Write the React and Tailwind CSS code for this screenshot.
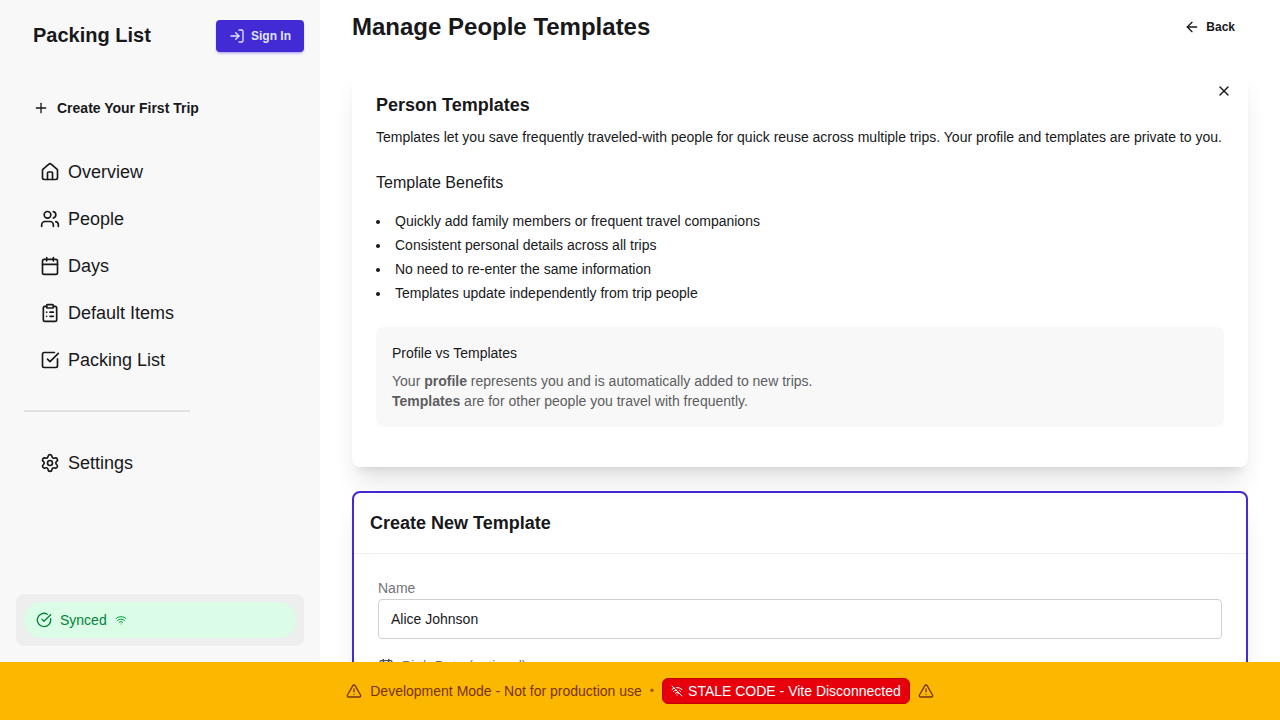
import React from 'react';
import {
  ArrowLeft,
  Calendar,
  CircleCheckBig,
  ClipboardList,
  House,
  LogIn,
  Plus,
  Settings,
  SquareCheckBig,
  TriangleAlert,
  Users,
  Wifi,
  WifiOff,
  X,
} from 'lucide-react';

const NAV = [
  { label: 'Overview', Icon: House },
  { label: 'People', Icon: Users },
  { label: 'Days', Icon: Calendar },
  { label: 'Default Items', Icon: ClipboardList },
  { label: 'Packing List', Icon: SquareCheckBig },
];

const BENEFITS = [
  'Quickly add family members or frequent travel companions',
  'Consistent personal details across all trips',
  'No need to re-enter the same information',
  'Templates update independently from trip people',
];

function NavLink({ label, Icon }) {
  return (
    <a href="#" className="flex items-center gap-2 px-4 py-2 text-lg">
      <Icon size={20} />
      {label}
    </a>
  );
}

function Sidebar() {
  return (
    <aside className="flex w-80 shrink-0 flex-col bg-[#f8f8f8] px-4 pt-5 pb-4">
      <div className="flex items-start justify-between">
        <h1 className="pl-[17px] text-xl leading-[30px] font-bold">Packing List</h1>
        <button
          type="button"
          className="flex h-8 items-center gap-1.5 rounded bg-[#422ad5] px-[13px] text-xs font-bold text-[#e0e7ff] shadow-[0_2px_3px_-1px_rgba(66,42,213,0.5)]"
        >
          <LogIn size={16} />
          Sign In
        </button>
      </div>

      <button type="button" className="mt-10 flex h-8 items-center gap-2 self-start px-[17px] text-sm font-bold">
        <Plus size={16} />
        Create Your First Trip
      </button>

      <nav className="mt-[26px] flex flex-col px-2">
        <ul className="flex flex-col gap-[3px]">
          {NAV.map((item) => (
            <li key={item.label}>
              <NavLink {...item} />
            </li>
          ))}
        </ul>
        <hr className="mt-7 mb-[29px] w-[166px] border-0 border-t-2 border-[#e2e2e2]" />
        <NavLink label="Settings" Icon={Settings} />
      </nav>

      <div className="mt-auto rounded-lg bg-[#eeeeee] p-2">
        <div className="flex h-9 items-center gap-2 rounded-full bg-green-100 px-3 text-sm text-green-700">
          <CircleCheckBig size={16} />
          Synced
          <Wifi size={12} className="text-green-600" />
        </div>
      </div>
    </aside>
  );
}

function InfoCard() {
  return (
    <section className="relative rounded-lg bg-white p-6 pb-10 shadow-xl">
      <button
        type="button"
        aria-label="Close"
        className="absolute top-2 right-2 flex size-8 items-center justify-center"
      >
        <X size={16} />
      </button>
      <h3 className="text-lg leading-7 font-bold">Person Templates</h3>
      <p className="mt-2 text-sm">
        Templates let you save frequently traveled-with people for quick reuse across multiple trips. Your
        profile and templates are private to you.
      </p>
      <h4 className="mt-6 text-base">Template Benefits</h4>
      <ul className="mt-4 list-inside list-disc space-y-1 text-sm">
        {BENEFITS.map((text) => (
          <li key={text}>{text}</li>
        ))}
      </ul>
      <div className="mt-6 rounded-lg bg-[#f8f8f8] p-4 text-sm">
        <h5>Profile vs Templates</h5>
        <p className="mt-2 text-[#5d5d5f]">
          Your <strong>profile</strong> represents you and is automatically added to new trips.
          <br />
          <strong>Templates</strong> are for other people you travel with frequently.
        </p>
      </div>
    </section>
  );
}

function CreateCard() {
  return (
    <section className="rounded-lg border-2 border-[#422ad5] bg-white shadow-xl">
      <div className="border-b border-[#eeeeee] p-4">
        <h3 className="text-lg leading-7 font-bold">Create New Template</h3>
      </div>
      <form className="flex flex-col gap-[17px] p-6">
        <div className="flex flex-col gap-px">
          <label htmlFor="name" className="text-sm text-[#747476]">
            Name
          </label>
          <input
            id="name"
            type="text"
            defaultValue="Alice Johnson"
            className="h-10 w-full rounded border border-[#d1d1d1] px-3 text-sm"
          />
        </div>
        <div className="flex flex-col gap-px">
          <label htmlFor="birth" className="flex items-center gap-2 text-sm text-[#747476]">
            <Calendar size={16} className="text-[#4b4b4d]" />
            Birth Date (optional)
          </label>
          <input id="birth" type="date" className="h-10 w-full rounded border border-[#d1d1d1] px-3 text-sm" />
        </div>
      </form>
    </section>
  );
}

export default function App() {
  return (
    <div className="flex h-screen flex-col bg-white font-['Liberation_Sans',Arial,sans-serif] text-[#18181b]">
      <div className="flex min-h-0 flex-1">
        <Sidebar />
        <main className="flex min-w-0 flex-1 flex-col gap-6 overflow-y-auto px-8 pt-[11px] pb-8 [scrollbar-width:none]">
          <header className="flex items-center justify-between">
            <h2 className="text-2xl font-bold">Manage People Templates</h2>
            <button type="button" className="flex h-8 items-center gap-1.5 px-[13px] text-xs font-bold">
              <ArrowLeft size={16} />
              Back
            </button>
          </header>
          <InfoCard />
          <CreateCard />
        </main>
      </div>

      <footer className="flex shrink-0 items-center justify-center gap-2 bg-[#fcb700] p-4 text-sm text-[#793205]">
        <TriangleAlert size={16} />
        <span>Development Mode - Not for production use</span>
        <span className="text-xs opacity-70">•</span>
        <span className="flex items-center gap-[5px] rounded-md border border-red-700 bg-red-600 px-2 py-[2px] font-medium text-white">
          <WifiOff size={12} />
          STALE CODE - Vite Disconnected
        </span>
        <TriangleAlert size={16} />
      </footer>
    </div>
  );
}
